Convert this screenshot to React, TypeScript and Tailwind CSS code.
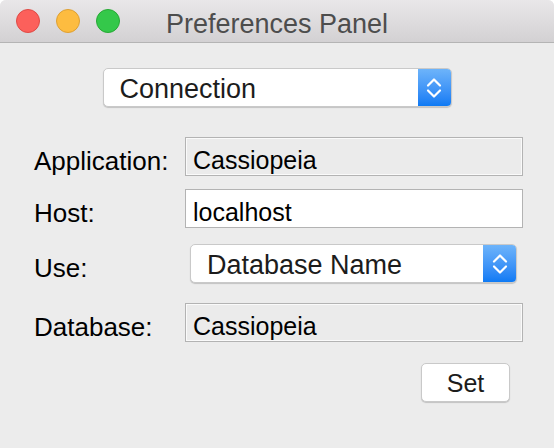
// Preferences Panel — macOS-style window

const font = { fontFamily: '"Liberation Sans", Arial, sans-serif' };

function Chevrons() {
  return (
    <svg width="16" height="24" viewBox="0 0 16 24" fill="none">
      <path d="M2 9.5 L8 3.5 L14 9.5" stroke="white" strokeWidth="2.2" strokeLinecap="round" strokeLinejoin="round" />
      <path d="M2 14.5 L8 20.5 L14 14.5" stroke="white" strokeWidth="2.2" strokeLinecap="round" strokeLinejoin="round" />
    </svg>
  );
}

function PopUp({ label, className }: { label: string; className: string }) {
  return (
    <div
      className={`flex h-[39px] shrink-0 items-stretch rounded-[5px] bg-white border border-[#c9c9c9] shadow-[0_1px_1px_rgba(0,0,0,0.18)] overflow-hidden ${className}`}
    >
      <div className="flex-1 flex items-center pl-[16px] pt-[3px] text-[27px] text-[#1c1c1c] leading-none whitespace-nowrap">
        {label}
      </div>
      <div className="w-[33px] flex items-center justify-center bg-gradient-to-b from-[#6db4fa] to-[#0c7af4]">
        <Chevrons />
      </div>
    </div>
  );
}

function Field({ value, disabled }: { value: string; disabled?: boolean }) {
  return (
    <div
      className={`w-[338px] h-[39px] shrink-0 border border-[#b3b3b3] flex items-center pl-[7px] pt-[8px] text-[25px] text-black leading-none ${
        disabled ? 'bg-[#ebebeb] shadow-[inset_0_0_0_1px_#fafafa]' : 'bg-white'
      }`}
    >
      {value}
    </div>
  );
}

function Label({ children }: { children: string }) {
  return (
    <div className="w-[185px] shrink-0 pl-[34px] pt-[8px] text-[26px] text-black leading-none whitespace-nowrap">
      {children}
    </div>
  );
}

export default function App() {
  return (
    <div className="w-[554px] h-[448px] bg-white" style={font}>
      <div className="w-full h-full rounded-t-[6px] overflow-hidden bg-[#ececec] flex flex-col">
        {/* Title bar */}
        <div className="h-[43px] shrink-0 flex items-center relative bg-gradient-to-b from-[#e9e7e9] to-[#d3d1d3] border-b border-[#b4b4b4]">
          <div className="flex items-center gap-[16px] pl-[16px]">
            <span className="w-[24px] h-[24px] rounded-full bg-[#fc605b] border border-[#df4a45]" />
            <span className="w-[24px] h-[24px] rounded-full bg-[#fdbc40] border border-[#dea033]" />
            <span className="w-[24px] h-[24px] rounded-full bg-[#34c84a] border border-[#27a935]" />
          </div>
          <div className="absolute left-0 right-0 top-0 bottom-0 flex items-center justify-center pt-[6px] text-[27px] text-[#4d4d4d] leading-none">
            Preferences Panel
          </div>
        </div>

        {/* Content */}
        <div className="flex flex-col">
          <div className="flex justify-center mt-[25px]">
            <PopUp label="Connection" className="w-[349px]" />
          </div>

          <div className="flex items-center mt-[30px]">
            <Label>Application:</Label>
            <Field value="Cassiopeia" disabled />
          </div>

          <div className="flex items-center mt-[13px]">
            <Label>Host:</Label>
            <Field value="localhost" />
          </div>

          <div className="flex items-center mt-[16px]">
            <Label>Use:</Label>
            <PopUp label="Database Name" className="w-[327px] ml-[5px]" />
          </div>

          <div className="flex items-center mt-[20px]">
            <Label>Database:</Label>
            <Field value="Cassiopeia" disabled />
          </div>

          <div className="flex justify-end mt-[21px] pr-[44px]">
            <button className="w-[89px] h-[39px] pt-[2px] rounded-[5px] bg-white border border-[#c9c9c9] shadow-[0_1px_1px_rgba(0,0,0,0.18)] text-[25px] text-[#1c1c1c] leading-none">
              Set
            </button>
          </div>
        </div>
      </div>
    </div>
  );
}
